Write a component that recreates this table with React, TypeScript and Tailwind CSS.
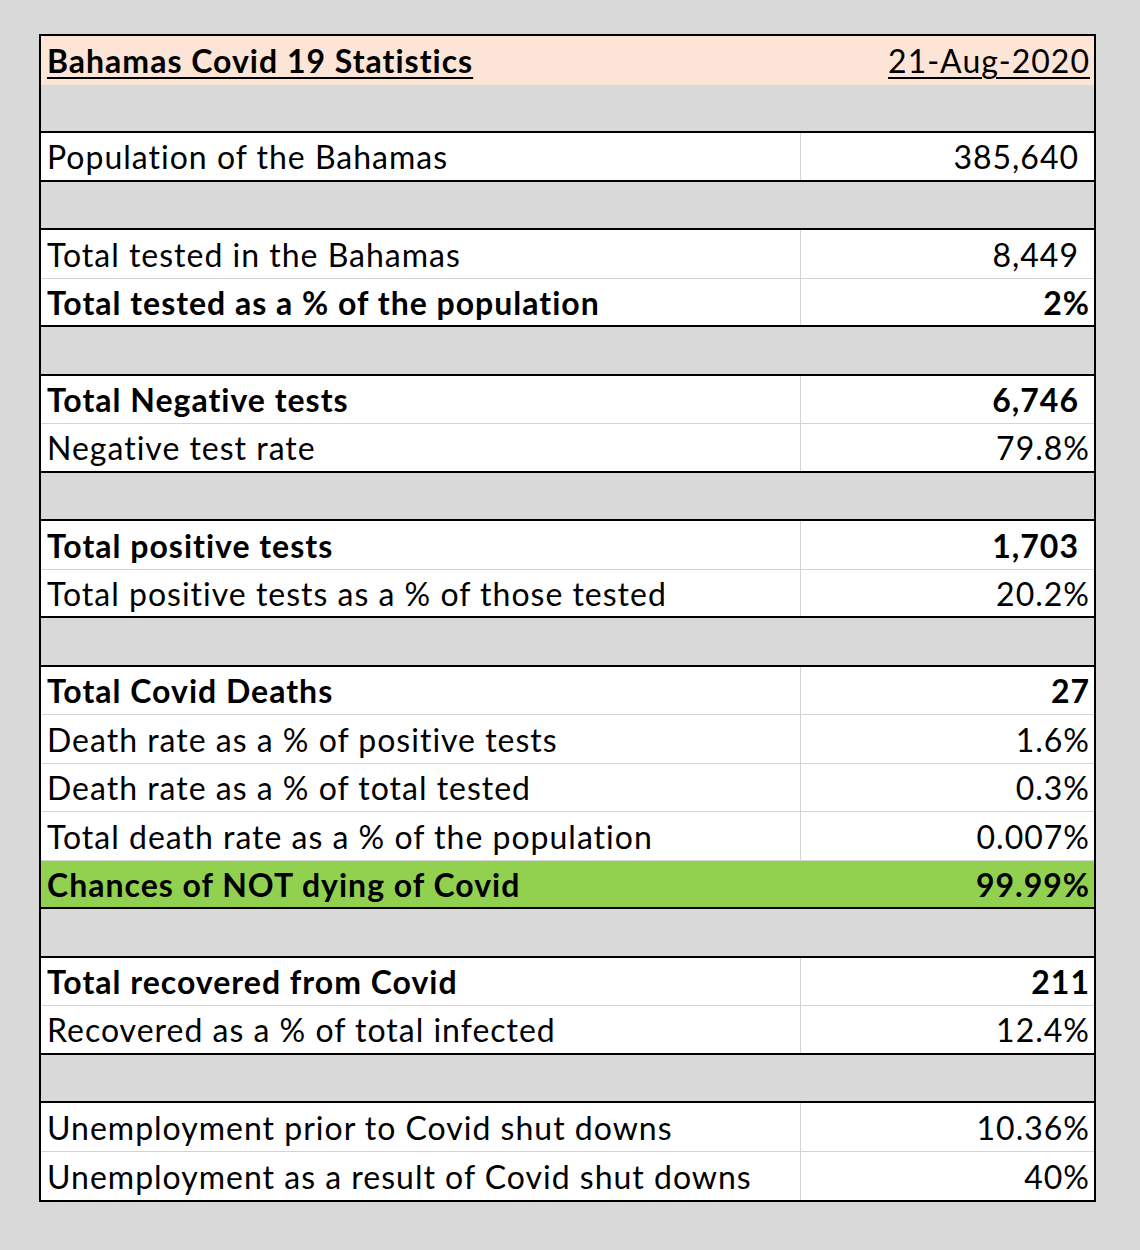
type Row =
    | { kind: "gap" }
    | { kind: "data"; label: string; value: string; bold?: boolean; green?: boolean; last?: boolean; pad?: boolean; end?: boolean }

const rows: Row[] = [
    { kind: "gap" },
    { kind: "data", label: "Population of the Bahamas", value: "385,640", last: true, pad: true },
    { kind: "gap" },
    { kind: "data", label: "Total tested in the Bahamas", value: "8,449", pad: true },
    { kind: "data", label: "Total tested as a % of the population", value: "2%", bold: true, last: true },
    { kind: "gap" },
    { kind: "data", label: "Total Negative tests", value: "6,746", bold: true, pad: true },
    { kind: "data", label: "Negative test rate", value: "79.8%", last: true },
    { kind: "gap" },
    { kind: "data", label: "Total positive tests", value: "1,703", bold: true, pad: true },
    { kind: "data", label: "Total positive tests as a % of those tested", value: "20.2%", last: true },
    { kind: "gap" },
    { kind: "data", label: "Total Covid Deaths", value: "27", bold: true },
    { kind: "data", label: "Death rate as a % of positive tests", value: "1.6%" },
    { kind: "data", label: "Death rate as a % of total tested", value: "0.3%" },
    { kind: "data", label: "Total death rate as a % of the population", value: "0.007%" },
    { kind: "data", label: "Chances of NOT dying of Covid", value: "99.99%", bold: true, green: true, last: true },
    { kind: "gap" },
    { kind: "data", label: "Total recovered from Covid", value: "211", bold: true },
    { kind: "data", label: "Recovered as a % of total infected", value: "12.4%", last: true },
    { kind: "gap" },
    { kind: "data", label: "Unemployment prior to Covid shut downs", value: "10.36%" },
    { kind: "data", label: "Unemployment as a result of Covid shut downs", value: "40%", end: true },
]

export default function App() {
    return (
        <div
            className="h-[1250px] w-[1140px] bg-[#d9d9d9] pl-[39px] pt-[34px] text-[32px] leading-none tracking-[1px] text-black"
            style={{ fontFamily: "Lato, 'Liberation Sans', sans-serif" }}
        >
            <div className="w-[1057px] border-2 border-black">
                <div className="flex h-[48.5px] items-center justify-between bg-[#fce4d6] pl-[6px] pr-[4px] pt-[2px]">
                    <span className="font-bold underline decoration-2 underline-offset-4">Bahamas Covid 19 Statistics</span>
                    <span className="underline decoration-2 underline-offset-4">21-Aug-2020</span>
                </div>
                {rows.map((r, i) =>
                    r.kind === "gap" ? (
                        <div key={i} className="h-[48.5px] border-b-2 border-black bg-[#d9d9d9]" />
                    ) : (
                        <div
                            key={i}
                            className={`grid h-[48.5px] grid-cols-[760px_1fr] ${r.green ? "bg-[#92d050]" : "bg-white"} ${
                                r.end ? "" : r.last ? "border-b-2 border-black" : "border-b border-[#d4d4d4]"
                            } ${r.bold ? "font-bold" : ""}`}
                        >
                            <div className={`flex items-center pl-[6px] pt-[2px] ${r.green ? "" : "border-r border-[#d4d4d4]"}`}>
                                {r.label}
                            </div>
                            <div className={`flex items-center justify-end pt-[2px] ${r.pad ? "pr-[15px]" : "pr-[4px]"}`}>
                                {r.value}
                            </div>
                        </div>
                    )
                )}
            </div>
        </div>
    )
}
